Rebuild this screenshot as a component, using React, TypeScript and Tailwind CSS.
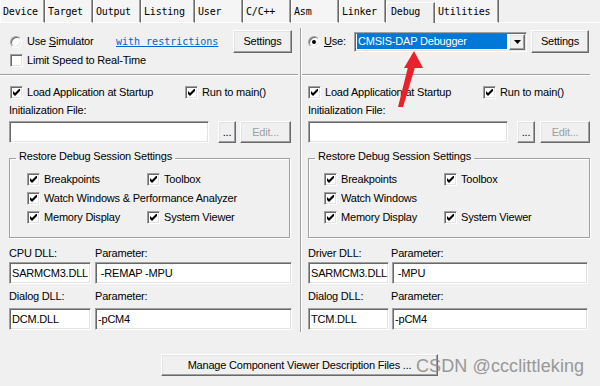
import React from "react";

const ui = "font-['Liberation_Sans',Arial,sans-serif] text-[11px] leading-[13px] tracking-[-0.2px] text-black";

function Check({ checked }: { checked?: boolean }) {
  return (
    <span className="w-[13px] h-[13px] shrink-0 bg-white border border-t-[#a0a0a0] border-l-[#a0a0a0] border-b-white border-r-white shadow-[inset_1px_1px_0_#696969,inset_-1px_-1px_0_#e3e3e3] flex items-center justify-center">
      {checked && (
        <svg width="7" height="7" viewBox="0 0 7 7">
          <polygon points="0,2 2,4 7,-1 7,2 2,7 0,5" fill="#000" />
        </svg>
      )}
    </span>
  );
}

function Radio({ checked }: { checked?: boolean }) {
  return (
    <span className="w-[12px] h-[12px] shrink-0 rounded-full bg-white border border-t-[#a0a0a0] border-l-[#a0a0a0] border-b-white border-r-white shadow-[inset_1px_1px_0_#696969,inset_-1px_-1px_0_#e3e3e3] flex items-center justify-center">
      {checked && <span className="w-[4px] h-[4px] rounded-full bg-black" />}
    </span>
  );
}

function Btn({ children, className = "", disabled }: { children: React.ReactNode; className?: string; disabled?: boolean }) {
  return (
    <div
      className={`flex items-center justify-center shrink-0 bg-[#f0f0f0] border border-t-white border-l-white border-b-[#696969] border-r-[#696969] shadow-[inset_-1px_-1px_0_#a0a0a0,inset_1px_1px_0_#e3e3e3] ${disabled ? "text-[#a0a0a0]" : "text-black"} ${className}`}
    >
      {children}
    </div>
  );
}

function Field({ children, className = "" }: { children?: React.ReactNode; className?: string }) {
  return (
    <div
      className={`h-[22px] shrink-0 bg-white border border-t-[#a0a0a0] border-l-[#a0a0a0] border-b-white border-r-white shadow-[inset_1px_1px_0_#696969,inset_-1px_-1px_0_#e3e3e3] flex items-center pl-[2px] whitespace-pre ${className}`}
    >
      {children}
    </div>
  );
}

function CheckRow({ label, checked, className = "" }: { label: string; checked?: boolean; className?: string }) {
  return (
    <div className={`flex items-center h-[13px] ${className}`}>
      <Check checked={checked} />
      <span className="ml-[4px] whitespace-nowrap">{label}</span>
    </div>
  );
}

function Separator({ className = "" }: { className?: string }) {
  return <div className={`h-[2px] border-t border-t-[#a0a0a0] border-b border-b-white ${className}`} />;
}

const tabs: string[] = ["Device", "Target", "Output", "Listing", "User", "C/C++", "Asm", "Linker", "Debug", "Utilities"];

const tabW: Record<string, string> = {
  Device: "w-[45px]",
  Target: "w-[48px]",
  Output: "w-[48px]",
  Listing: "w-[54px]",
  User: "w-[48px]",
  "C/C++": "w-[48px]",
  Asm: "w-[48px]",
  Linker: "w-[47px]",
  Debug: "w-[49px]",
  Utilities: "w-[64px]",
};

function TabStrip() {
  return (
    <div className="flex h-[23px] font-['DejaVu_Sans_Mono','Liberation_Mono',monospace] text-[10px] leading-[12px] text-black">
      {tabs.map((name) =>
        name === "Debug" ? (
          <div
            key={name}
            className={`${tabW[name]} mt-[2px] h-[21px] shrink-0 border-t border-t-white border-l border-l-white border-r border-r-[#696969] shadow-[inset_-1px_0_0_#a0a0a0] bg-[#f0f0f0] pl-[4px] pt-[3px]`}
          >
            {name}
          </div>
        ) : (
          <div
            key={name}
            className={`${tabW[name]} h-[23px] shrink-0 border-l border-l-white border-r border-r-[#696969] border-b border-b-white shadow-[inset_-1px_0_0_#a0a0a0] bg-[#f5f5f5] pl-[2px] pt-[6px]`}
          >
            {name}
          </div>
        )
      )}
      <div className="flex-1 h-[23px] border-b border-b-white" />
    </div>
  );
}

function GroupBox({ right }: { right?: boolean }) {
  return (
    <fieldset
      className={`mt-[7px] h-[88px] ${right ? "w-[282px]" : "w-[281px]"} border border-[#a0a0a0] shadow-[inset_1px_1px_0_#ffffff,1px_1px_0_#ffffff] px-0`}
    >
      <legend className="ml-[6px] px-[3px] pb-[4px] leading-[13px]">Restore Debug Session Settings</legend>
      <div className={`flex flex-col gap-[6px] mt-[6px] ${right ? "pl-[15px]" : "pl-[17px]"}`}>
        <div className="flex">
          <div className="w-[120px]">
            <CheckRow label="Breakpoints" checked />
          </div>
          <CheckRow label="Toolbox" checked />
        </div>
        <CheckRow label={right ? "Watch Windows" : "Watch Windows & Performance Analyzer"} checked />
        <div className="flex">
          <div className="w-[120px]">
            <CheckRow label="Memory Display" checked />
          </div>
          <CheckRow label="System Viewer" checked />
        </div>
      </div>
    </fieldset>
  );
}

function LowerPart({ right }: { right?: boolean }) {
  return (
    <>
      <div className={`mt-[10px] flex h-[13px] items-center ${right ? "" : "pl-[1px]"}`}>
        <div className="w-[175px]">
          <CheckRow label="Load Application at Startup" checked />
        </div>
        <CheckRow label="Run to main()" checked />
      </div>
      <div className="mt-[5px] h-[13px]">Initialization File:</div>
      <div className="mt-[4px] flex">
        <Field className="w-[200px]" />
        <Btn className="ml-[9px] w-[18px] h-[22px] items-end pb-[3px]">...</Btn>
        <Btn disabled className={right ? "ml-[5px] w-[50px] h-[22px]" : "ml-[4px] w-[51px] h-[22px]"}>
          Edit...
        </Btn>
      </div>
      <GroupBox right={right} />
      <div className="mt-[9px] flex h-[13px]">
        <div className={right ? "w-[83px]" : "w-[86px]"}>{right ? "Driver DLL:" : "CPU DLL:"}</div>
        <div>Parameter:</div>
      </div>
      <div className="mt-[2px] flex">
        <Field className={right ? "w-[81px]" : "w-[82px]"}>SARMCM3.DLL</Field>
        <Field className={right ? "ml-[3px] w-[196px]" : "ml-[4px] w-[197px]"}>{right ? " -MPU" : " -REMAP -MPU"}</Field>
      </div>
      <div className="mt-[6px] flex h-[13px]">
        <div className={right ? "w-[83px]" : "w-[86px]"}>Dialog DLL:</div>
        <div>Parameter:</div>
      </div>
      <div className="mt-[5px] flex">
        <Field className={right ? "w-[81px]" : "w-[82px]"}>{right ? "TCM.DLL" : "DCM.DLL"}</Field>
        <Field className={right ? "ml-[3px] w-[196px]" : "ml-[4px] w-[197px]"}>-pCM4</Field>
      </div>
    </>
  );
}

export default function App() {
  return (
    <div className={`relative w-[600px] h-[386px] overflow-hidden bg-[#f0f0f0] ${ui}`}>
      <TabStrip />
      <div className="flex">
        {/* Left column */}
        <div className="w-[300px] pl-[9px] flex flex-col">
          <div className="mt-[7px] h-[23px] flex items-center">
            <span className="ml-[1px]">
              <Radio />
            </span>
            <span className="ml-[5px] w-[89px] whitespace-nowrap">
              Use <span className="underline">S</span>imulator
            </span>
            <span className="w-[102px] font-['DejaVu_Sans_Mono','Liberation_Mono',monospace] text-[10px] tracking-normal text-[#0066cc] underline whitespace-nowrap">
              with restrictions
            </span>
            <Btn className="ml-[15px] w-[59px] h-[23px]">Settings</Btn>
          </div>
          <div className="mt-[1px] flex h-[13px] items-center pl-[1px]">
            <Check />
            <span className="ml-[4px] whitespace-nowrap">Limit Speed to Real-Time</span>
          </div>
          <Separator className="mt-[7px] -ml-[9px] w-[298px]" />
          <div className="flex flex-col">
            <LowerPart />
          </div>
        </div>

        {/* Divider */}
        <div className="mt-[5px] h-[304px] w-[2px] border-l border-l-[#a0a0a0] border-r border-r-white" />

        {/* Right column */}
        <div className="w-[298px] pl-[6px] flex flex-col">
          <div className="mt-[7px] h-[23px] flex items-center">
            <Radio checked />
            <span className="ml-[4px] w-[30px] whitespace-nowrap">
              <span className="underline">U</span>se:
            </span>
            <div className="w-[173px] h-[20px] bg-white border border-t-[#a0a0a0] border-l-[#a0a0a0] border-b-white border-r-white shadow-[inset_1px_1px_0_#696969,inset_-1px_-1px_0_#e3e3e3] flex items-center pl-[2px] pr-[1px]">
              <div className="flex-1 h-[15px] bg-[#0078d7] text-white leading-[15px] pl-[1px] whitespace-nowrap">
                CMSIS-DAP Debugger
              </div>
              <Btn className="ml-[2px] w-[16px] h-[16px]">
                <svg width="7" height="4" viewBox="0 0 7 4">
                  <polygon points="0,0 7,0 3.5,4" fill="#000" />
                </svg>
              </Btn>
            </div>
            <Btn className="ml-[4px] w-[58px] h-[23px]">Settings</Btn>
          </div>
          <Separator className="mt-[21px] -ml-[6px] w-[288px]" />
          <div className="flex flex-col">
            <LowerPart right />
          </div>
        </div>
      </div>

      <div className="mt-[22px] ml-[161px]">
        <Btn className="w-[277px] h-[22px]">Manage Component Viewer Description Files ...</Btn>
      </div>

      {/* Watermark overlay */}
      <div className="absolute left-[416px] top-[357px] font-['Liberation_Sans',Arial,sans-serif] text-[18px] leading-[18px] tracking-[0.1px] text-[#8f8f8f] opacity-90 whitespace-nowrap">
        CSDN @ccclittleking
      </div>

      {/* Red annotation arrow overlay */}
      <svg className="absolute left-0 top-0 pointer-events-none" width="600" height="386" viewBox="0 0 600 386">
        <polygon points="398,107 403,107 416,64 409,63" fill="#e8212b" />
        <polygon points="414,51 404,68 423,68" fill="#e8212b" />
      </svg>
    </div>
  );
}
